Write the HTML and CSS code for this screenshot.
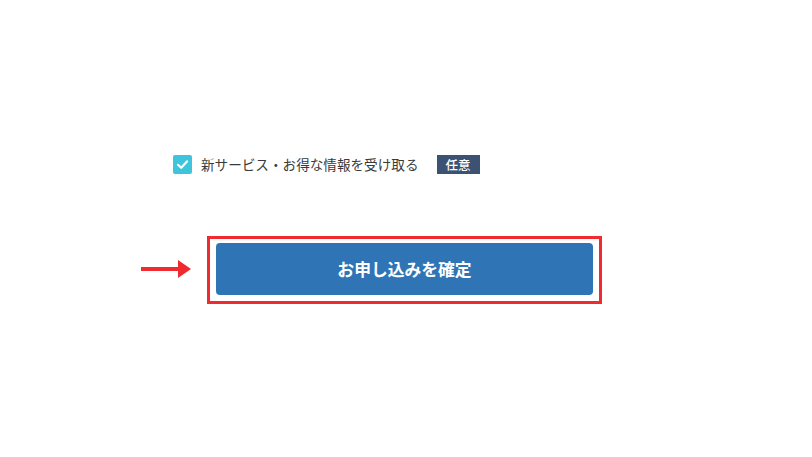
FILE: index.html
```html
<!DOCTYPE html>
<html lang="ja">
<head>
<meta charset="utf-8">
<title>お申し込み</title>
<link rel="stylesheet" href="styles.css">
</head>
<body>
<main class="page">
  <label class="consent">
    <span class="checkbox">
      <svg viewBox="0 0 19 19" width="19" height="19" aria-hidden="true">
        <polyline points="5,9.8 8.2,12.8 14,6.4" fill="none" stroke="#fff" stroke-width="2.2" stroke-linecap="round" stroke-linejoin="round"/>
      </svg>
    </span>
    <span class="consent-text">新サービス・お得な情報を受け取る</span>
    <span class="badge">任意</span>
  </label>

  <div class="submit-row">
    <svg class="arrow" viewBox="0 0 50 18" width="50" height="18" aria-hidden="true">
      <rect x="0" y="7" width="39" height="4" fill="#ef2b2f"/>
      <polygon points="37,0 50,9 37,18" fill="#ef2b2f"/>
    </svg>
    <div class="highlight">
      <button class="submit" type="button">お申し込みを確定</button>
    </div>
  </div>
</main>
</body>
</html>
```

FILE: styles.css
```css
html, body {
  margin: 0;
  padding: 0;
  background: #ffffff;
}

body {
  font-family: "Noto Sans CJK JP", "Noto Sans", sans-serif;
  color: #333333;
}

.page {
  display: flex;
  flex-direction: column;
  padding-top: 155px;
}

.consent {
  display: flex;
  align-items: center;
  margin-left: 173px;
  height: 19px;
}

.checkbox {
  width: 19px;
  height: 19px;
  border-radius: 2px;
  background: #3ec5dc;
  display: flex;
  flex-shrink: 0;
}

.consent-text {
  margin-left: 9px;
  font-size: 13.6px;
  line-height: 19px;
  color: #3a3a3a;
  white-space: nowrap;
}

.badge {
  margin-left: 18px;
  width: 43px;
  height: 19px;
  background: #3c5272;
  color: #ffffff;
  font-size: 12.5px;
  font-weight: 500;
  line-height: 19px;
  text-align: center;
}

.submit-row {
  display: flex;
  align-items: center;
  gap: 16px;
  margin-top: 62px;
  margin-left: 141px;
}

.arrow {
  display: block;
  margin-top: -2px;
}

.highlight {
  border: 3px solid #ef2b2f;
  padding: 4px 6px 6px 6px;
}

.submit {
  display: block;
  width: 377px;
  height: 52px;
  border: none;
  border-radius: 4px;
  background: #2f75b6;
  color: #ffffff;
  font-family: "Noto Sans CJK JP", "Noto Sans", sans-serif;
  font-size: 16.8px;
  font-weight: 700;
  padding: 0;
  cursor: pointer;
}
```
